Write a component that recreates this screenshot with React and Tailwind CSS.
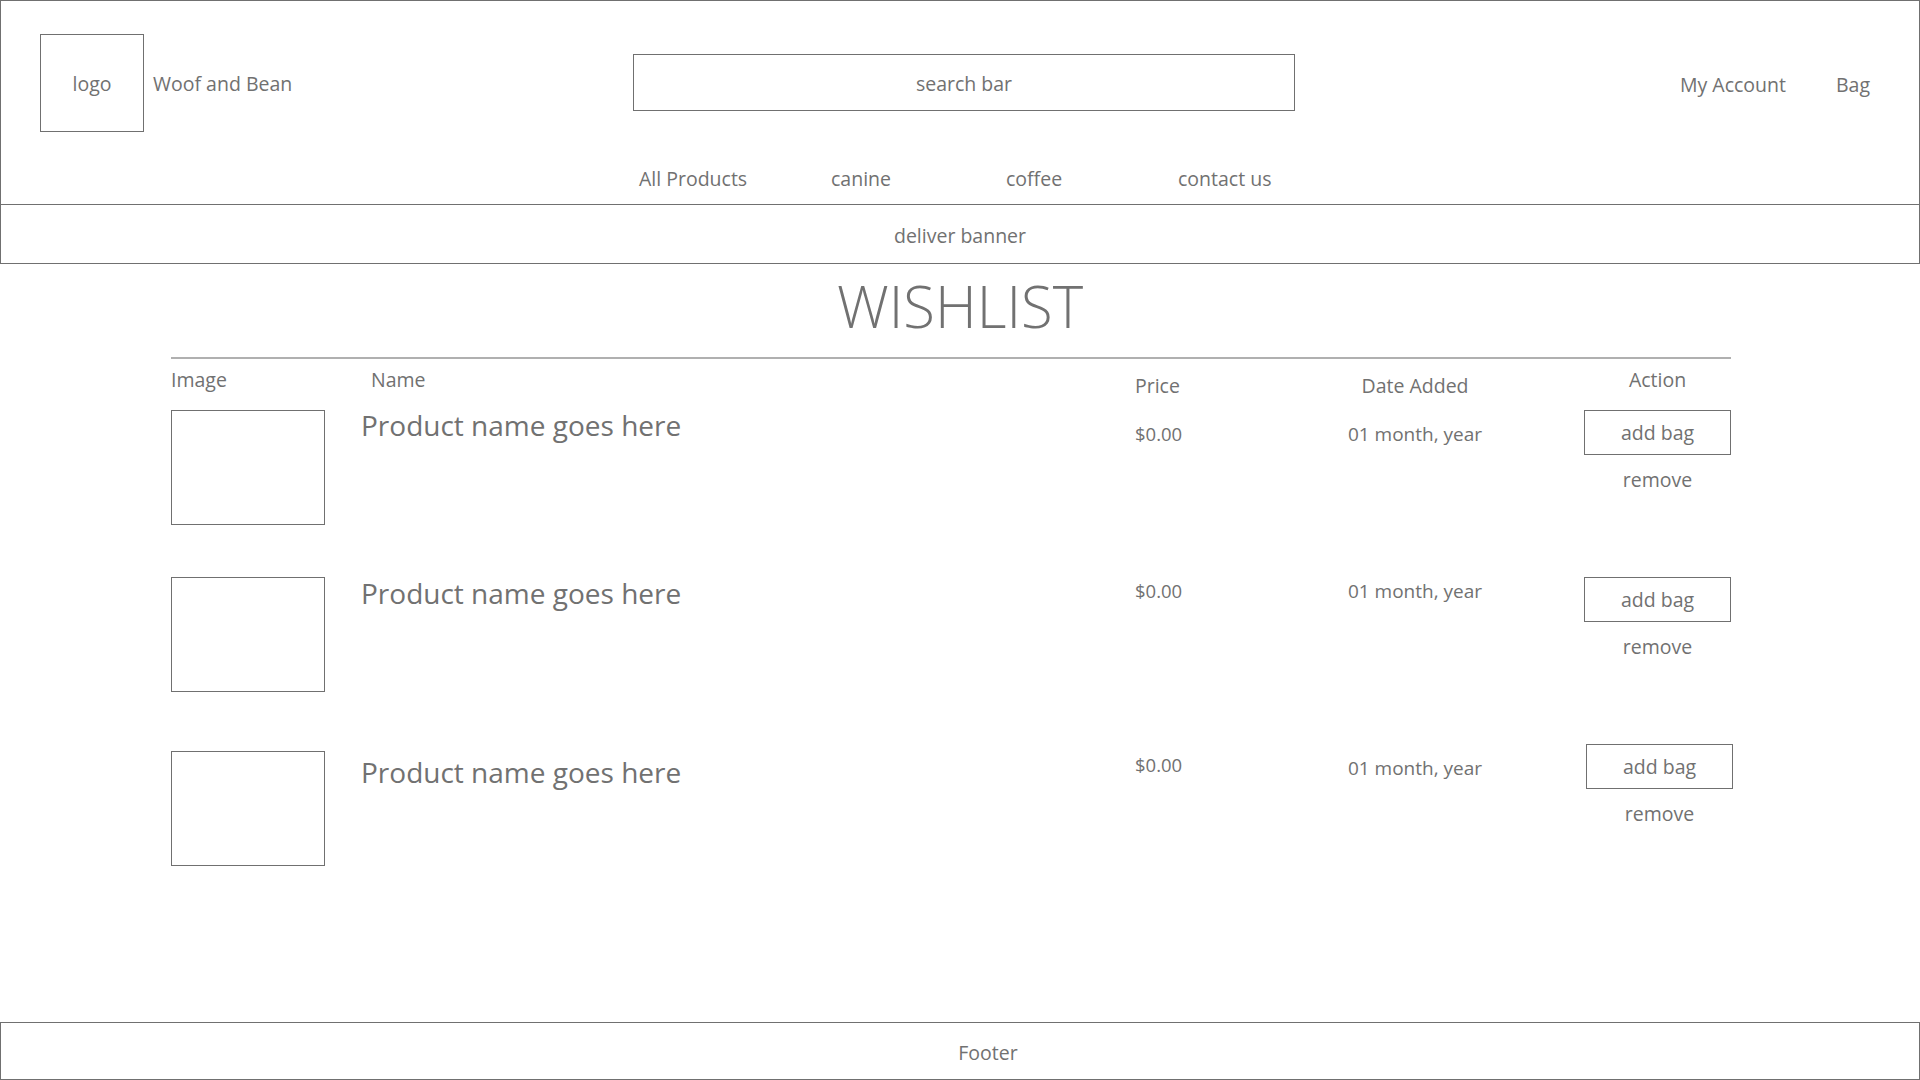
import React from "react";

const rows = [
  { name: "mt-[-2px]", price: "mt-[12px]", date: "mt-[12px]", btn: "mt-0 ml-0", gap: "mt-0" },
  { name: "mt-[-1px]", price: "mt-[2px]", date: "mt-[2px]", btn: "mt-0 ml-0", gap: "mt-[52px]" },
  { name: "mt-[4px]", price: "mt-[2px]", date: "mt-[5px]", btn: "mt-[-7px] ml-[2px]", gap: "mt-[59px]" },
];

const font = { fontFamily: '"Open Sans", "Noto Sans", sans-serif' };

const WishRow = ({ r }) => (
  <div className={`flex items-start ${r.gap}`}>
    <div className="w-[190px] shrink-0">
      <div className="w-[154px] h-[115px] border border-[#707070]" />
    </div>
    <div className={`w-[774px] shrink-0 text-[28px] leading-[34px] ${r.name}`}>
      Product name goes here
    </div>
    <div className={`w-[136px] shrink-0 text-[18.5px] leading-[24px] ${r.price}`}>$0.00</div>
    <div className={`w-[288px] shrink-0 text-center text-[19px] leading-[24px] ${r.date}`}>
      01 month, year
    </div>
    <div className="w-[25px] shrink-0" />
    <div className={`w-[147px] shrink-0 flex flex-col items-center ${r.btn}`}>
      <button className="w-[147px] h-[45px] border border-[#707070] text-[19.5px] text-[#717171]">
        add bag
      </button>
      <span className="mt-[13px] text-[19.5px] leading-[24px]">remove</span>
    </div>
  </div>
);

export default function App() {
  return (
    <div className="h-screen flex flex-col bg-white text-[#717171]" style={font}>
      {/* Header */}
      <header className="h-[205px] border border-[#707070] flex flex-col text-[19.5px]">
        <div className="flex items-start pt-[33px]">
          <div className="w-[632px] pl-[39px] flex items-center shrink-0">
            <div className="w-[104px] h-[98px] border border-[#707070] flex items-center justify-center pt-[2px]">
              logo
            </div>
            <span className="ml-[9px] pt-[2px]">Woof and Bean</span>
          </div>
          <div className="mt-[20px] w-[662px] h-[57px] border border-[#707070] flex items-center justify-center pt-[3px] shrink-0">
            search bar
          </div>
          <div className="flex-1 flex justify-end gap-[50px] pr-[49px] mt-[39px] leading-[24px]">
            <span>My Account</span>
            <span>Bag</span>
          </div>
        </div>
        <nav className="flex pl-[638px] mt-[35px] leading-[24px]">
          <span className="w-[192px]">All Products</span>
          <span className="w-[175px]">canine</span>
          <span className="w-[172px]">coffee</span>
          <span>contact us</span>
        </nav>
      </header>

      {/* Delivery banner */}
      <div className="h-[59px] border-x border-b border-[#707070] flex items-center justify-center pt-[3px] text-[19.5px]">
        deliver banner
      </div>

      {/* Main */}
      <main className="flex-1 flex flex-col">
        <div className="h-[93px] flex items-center justify-center pb-[10px] text-[58px] leading-none font-light">
          WISHLIST
        </div>
        <div className="ml-[171px] w-[1560px]">
          <div className="h-[2px] bg-[#b0b0b0]" />
          <div className="flex items-start h-[51px] text-[19.5px] leading-[24px]">
            <div className="w-[190px] mt-[9px]">Image</div>
            <div className="w-[774px] mt-[9px] pl-[10px]">Name</div>
            <div className="w-[136px] mt-[15px]">Price</div>
            <div className="w-[288px] mt-[15px] text-center">Date Added</div>
            <div className="w-[25px]" />
            <div className="w-[147px] mt-[9px] text-center">Action</div>
          </div>
          {rows.map((r, i) => (
            <WishRow key={i} r={r} />
          ))}
        </div>
      </main>

      {/* Footer */}
      <footer className="h-[58px] border border-[#707070] flex items-center justify-center pl-[56px] pt-[3px] text-[19.5px]">
        Footer
      </footer>
    </div>
  );
}
